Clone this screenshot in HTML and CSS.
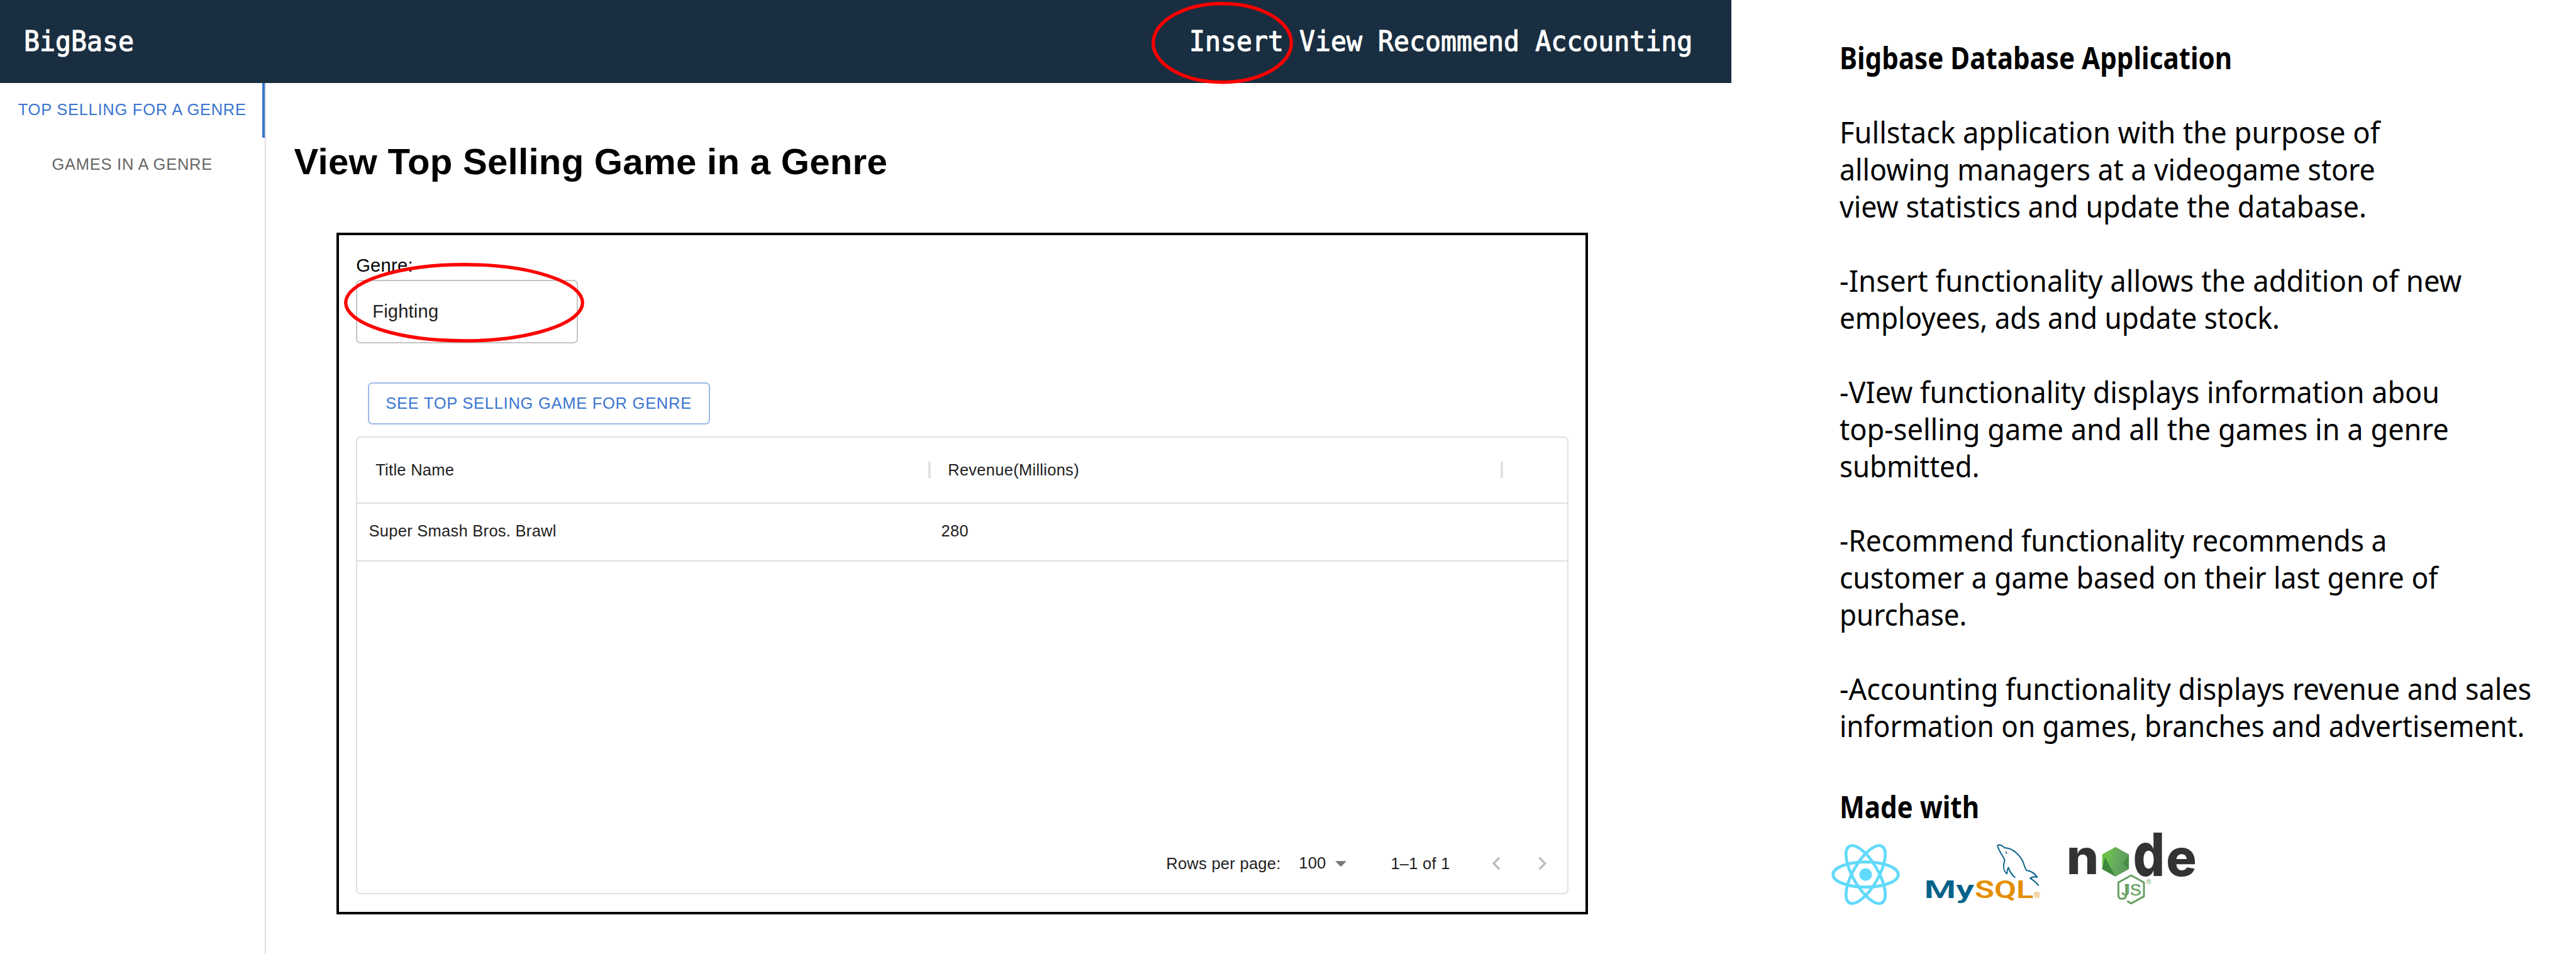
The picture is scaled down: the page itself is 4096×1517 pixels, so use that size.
FILE: index.html
```html
<!DOCTYPE html>
<html lang="en">
<head>
<meta charset="utf-8">
<title>BigBase</title>
<link rel="stylesheet" href="styles.css">
</head>
<body>
<div class="page">
  <div class="app">
    <header class="topbar">
      <div class="brand"><span class="fit">BigBase</span></div>
      <nav class="nav"><span class="fit">Insert View Recommend Accounting</span>
        <svg class="ring ring-insert" viewBox="0 0 225 130.5"><ellipse cx="112.5" cy="65.2" rx="109.8" ry="62.5"/></svg>
      </nav>
    </header>
    <div class="body">
      <aside class="tabs">
        <div class="tab active">TOP SELLING FOR A GENRE</div>
        <div class="tab">GAMES IN A GENRE</div>
      </aside>
      <main class="main">
        <h1>View Top Selling Game in a Genre</h1>
        <section class="panel">
          <label class="label">Genre:</label>
          <div class="select">Fighting
            <svg class="ring ring-genre" viewBox="0 0 382 126.6"><ellipse cx="191" cy="63.3" rx="188.3" ry="60.6"/></svg>
          </div>
          <button class="button">SEE TOP SELLING GAME FOR GENRE</button>
          <div class="grid">
            <div class="grid-head">
              <div class="cell">Title Name<i class="sep"></i></div>
              <div class="cell">Revenue(Millions)<i class="sep"></i></div>
            </div>
            <div class="grid-row">
              <div class="cell">Super Smash Bros. Brawl</div>
              <div class="cell">280</div>
            </div>
            <div class="grid-space"></div>
            <div class="grid-foot">
              <span class="rows">Rows per page:</span>
              <span class="size">100</span>
              <svg class="caret" viewBox="0 0 18 9"><path d="M0 0h18l-9 9z"/></svg>
              <span class="range">1–1 of 1</span>
              <svg class="chev" viewBox="0 0 14 22"><path d="M12.400 1.500 3 11l9.400 9.500"/></svg>
              <svg class="chev next" viewBox="0 0 14 22"><path d="M1.600 1.500 11 11l-9.400 9.500"/></svg>
            </div>
          </div>
        </section>
      </main>
    </div>
  </div>
  <article class="about">
    <h2><span class="fit f887">Bigbase Database Application</span></h2>
    <p><span class="fit f953">Fullstack application with the purpose of</span>
    <span class="fit f939">allowing managers at a videogame store</span>
    <span class="fit f942">view statistics and update the database.</span></p>
    <p><span class="fit f957">-Insert functionality allows the addition of new</span>
    <span class="fit f927">employees, ads and update stock.</span></p>
    <p><span class="fit f946">-VIew functionality displays information abou</span>
    <span class="fit f950">top-selling game and all the games in a genre</span>
    <span class="fit f929">submitted.</span></p>
    <p><span class="fit f933">-Recommend functionality recommends a</span>
    <span class="fit f936">customer a game based on their last genre of</span>
    <span class="fit f927">purchase.</span></p>
    <p><span class="fit f946">-Accounting functionality displays revenue and sales</span>
    <span class="fit f928">information on games, branches and advertisement.</span></p>
    <h2 class="made"><span class="fit f887">Made with</span></h2>
    <div class="logos">
      <svg class="react" viewBox="0 0 420 390">
        <g fill="none" stroke="#61dafb" stroke-width="15.500">
          <ellipse cx="206" cy="190" rx="171" ry="66"/>
          <ellipse cx="206" cy="190" rx="171" ry="66" transform="rotate(60 206 190)"/>
          <ellipse cx="206" cy="190" rx="171" ry="66" transform="rotate(120 206 190)"/>
        </g>
        <circle cx="206" cy="190" r="33" fill="#61dafb"/>
      </svg>
      <svg class="mysql" viewBox="0 0 690 390">
        <path d="M512 219C495 207 484 190 476 166C470 178 468 190 469 199C452 187 446 162 457 130C452 110 438 97 432 82C427 68 415 58 421 50C430 43 446 52 456 63C500 65 541 102 556 145C562 165 567 178 573 182C592 184 612 195 628 217C615 213 600 216 590 222C610 235 625 245 635 262" fill="none" stroke="#00618a" stroke-width="6.500" stroke-linejoin="round"/>
        <path d="M461 82q9 3 9 14q-9-3-9-14z" fill="#00618a"/>
        <g font-family="Roboto, sans-serif" font-weight="600" font-size="129">
          <text x="35" y="327" textLength="262" lengthAdjust="spacingAndGlyphs" fill="#00618a">My</text>
          <text x="300" y="327" textLength="308" lengthAdjust="spacingAndGlyphs" fill="#e48e00">SQL</text>
        </g>
        <text x="611" y="327" font-family="Liberation Sans, sans-serif" font-size="42" fill="#e48e00">®</text>
      </svg>
      <svg class="node" viewBox="0 0 720 450">
        <defs>
          <linearGradient id="leaf" x1="0" y1="0.200" x2="1" y2="0.500"><stop offset="0.200" stop-color="#6cc04a"/><stop offset="0.600" stop-color="#66a860"/><stop offset="1" stop-color="#5b9a55"/></linearGradient>
        </defs>
        <g font-family="Inter, sans-serif" font-weight="800" fill="#333">
          <text x="16" y="259" font-size="252" textLength="170" lengthAdjust="spacingAndGlyphs">n</text>
          <text transform="translate(365 269) scale(1 1.180)" font-size="266" textLength="166" lengthAdjust="spacingAndGlyphs">d</text>
          <text x="538" y="269" font-size="270" textLength="160" lengthAdjust="spacingAndGlyphs">e</text>
        </g>
        <path d="M273 118 343 157V234L273 273 203 234V157z" fill="url(#leaf)"/>
        <path d="M203 234 218 172 273 273z" fill="#3f873f"/>
        <path d="M343 157V234L310 205z" fill="#3f873f" opacity=".7"/>
        <path d="M334 402 355 414 422 377V304L355 267 288 304V372Q288 390 308 390Q329 390 329 368V313" fill="none" stroke="#689f63" stroke-width="10" stroke-linejoin="round"/>
        <text x="304" y="373" textLength="104" lengthAdjust="spacingAndGlyphs" font-family="Liberation Sans, sans-serif" font-size="88" stroke="#689f63" stroke-width="1.500" fill="#689f63">JS</text>
        <text x="435" y="314" font-family="Liberation Sans, sans-serif" font-size="33" fill="#689f63">®</text>
      </svg>
    </div>
  </article>
</div>
</body>
</html>
```
FILE: styles.css
```css
* { box-sizing: border-box; }
body { margin: 0; background: #fff; color: #000; font-family: "Liberation Sans", Arial, sans-serif; }
.page { display: flex; width: 4096px; height: 1517px; overflow: hidden; }
.app { display: flex; flex-direction: column; width: 2752.5px; flex: none; }

/* Condensed line of text, narrowed from its left edge */
.fit { display: block; width: max-content; white-space: nowrap; transform-origin: 0 50%; }
.f887 { transform: scaleX(0.887); }
.f927 { transform: scaleX(0.927); }
.f928 { transform: scaleX(0.928); }
.f929 { transform: scaleX(0.923); }
.f933 { transform: scaleX(0.933); }
.f936 { transform: scaleX(0.936); }
.f939 { transform: scaleX(0.939); }
.f942 { transform: scaleX(0.942); }
.f946 { transform: scaleX(0.946); }
.f950 { transform: scaleX(0.950); }
.f953 { transform: scaleX(0.953); }
.f957 { transform: scaleX(0.957); }

.topbar { display: flex; justify-content: space-between; align-items: center; height: 132px; flex: none; padding: 0 65px 0 38px; background: #192e40; color: #fff; font: 45px/60px "DejaVu Sans Mono", monospace; -webkit-text-stroke: 1.2px #fff; }
.topbar .fit { transform: scaleX(0.923); }
.brand { width: 174px; }
.nav { position: relative; width: 797px; }
.ring { position: absolute; fill: none; stroke: #f00; stroke-width: 5.4; overflow: visible; }
.ring-insert { left: -60px; top: -32.6px; width: 225px; height: 130.5px; }

.body { display: flex; flex: 1; }
.tabs { width: 422.5px; flex: none; border-right: 2px solid #dedede; }
.tab { display: flex; align-items: center; justify-content: center; height: 87.4px; padding-bottom: 3px; color: #666; font-size: 25.5px; letter-spacing: 0.02857em; }
.tab.active { color: #3a75cf; box-shadow: inset -4px 0 #3a75cf; }

.main { padding: 90px 0 0 45px; }
h1 { margin: 0 0 78px; font-size: 58.2px; line-height: 70px; letter-spacing: 0.25px; white-space: nowrap; }
.panel { width: 1990px; height: 1083.5px; margin-left: 67.7px; padding: 31px 27px; border: 4px solid #000; }
.label { display: block; font-size: 29.1px; line-height: 34px; letter-spacing: 0.3px; }
.select { position: relative; display: flex; align-items: center; width: 352.5px; height: 101px; margin-top: 6px; padding: 0 0 0 24px; border: 2px solid #c4c4c4; border-radius: 7px; color: #212121; font-size: 29.1px; letter-spacing: 0.2px; }
.ring-genre { left: -21.5px; top: -29px; width: 382px; height: 126.6px; }
.button { display: block; width: 544px; height: 67px; margin: 62.3px 0 18.6px 18.4px; padding: 0; border: 2px solid #9cbae7; border-radius: 7px; background: none; color: #3a75cf; font: 25.5px "Liberation Sans", Arial, sans-serif; letter-spacing: 0.02857em; }

.grid { display: flex; flex-direction: column; width: 1928px; height: 728px; border: 2px solid #e0e0e0; border-radius: 7px; color: #212121; font-size: 25.5px; letter-spacing: 0.01071em; }
.grid-head, .grid-row { display: grid; grid-template-columns: 910px 910px; border-bottom: 2px solid #e0e0e0; }
.grid-head { height: 104.7px; }
.grid-row { height: 92.6px; }
.cell { display: flex; align-items: center; justify-content: space-between; }
.grid-head .cell { padding-left: 29px; }
.grid-row .cell { padding: 0 0 3px 18.3px; }
.sep { width: 3.6px; height: 25.5px; margin-right: -1.8px; background: #e0e0e0; }
.grid-space { flex: 1; }
.grid-foot { display: flex; align-items: center; height: 93px; padding-left: 1286px; }
.rows { width: 211px; padding-top: 1px; }
.size { width: 57.5px; padding-bottom: 2px; }
.caret { width: 18.2px; height: 9.4px; fill: #757575; }
.range { width: 161.5px; margin-left: 70.5px; margin-right: -0.8px; padding-top: 1px; }
.chev { width: 13.7px; height: 22px; fill: none; stroke: #bdbdbd; stroke-width: 3.4; }
.next { margin-left: 60px; }

.about { flex: 1; padding: 62px 0 0 172.5px; font: 47.5px/59px "Noto Sans", sans-serif; }
h2 { margin: 0; font-size: 47.5px; line-height: 59px; font-weight: 700; }
p { margin: 59px 0 0; }
.made { margin-top: 69.7px; }
.logos { display: flex; align-items: flex-start; margin: -1px 0 0 -21.4px; }
.react { width: 127.4px; height: 118.3px; margin-top: 22.8px; }
.mysql { width: 209.3px; height: 118.3px; margin: 18.2px 22.8px 0 18.2px; }
.node { width: 218.4px; height: 136.5px; }
```
